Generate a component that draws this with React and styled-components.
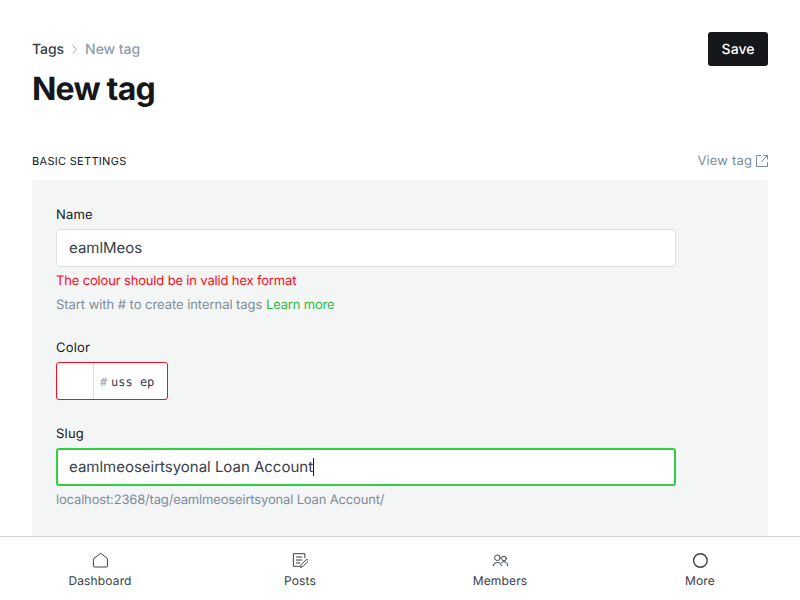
import React from 'react';
import styled, { createGlobalStyle } from 'styled-components';

const Global = createGlobalStyle`
  *, *::before, *::after { box-sizing: border-box; }
  body {
    margin: 0;
    background: #fff;
    color: #15171a;
    font-family: Inter, "Liberation Sans", sans-serif;
    font-weight: 370;
    text-rendering: geometricPrecision;
    overflow: hidden;
  }
`;

const Page = styled.div`
  height: 600px;
  display: flex;
  flex-direction: column;
`;
const Main = styled.main`
  flex: 1;
  min-height: 0;
  overflow: hidden;
  padding: 32px 32px 0;
`;
const Header = styled.header`
  display: flex;
  justify-content: space-between;
  align-items: flex-start;
  height: 117px;
`;
const Breadcrumb = styled.nav`
  display: flex;
  align-items: center;
  height: 35px;
  font-size: 14px;
  font-weight: 500;
  letter-spacing: -0.05px;
  color: #8e9cac;
  svg { margin: 0 7px; }
`;
const Crumb = styled.a`
  color: #394047;
`;
const Title = styled.h1`
  margin: 0;
  font-size: 32px;
  line-height: 44px;
  font-weight: 700;
  letter-spacing: -0.8px;
`;
const SaveButton = styled.button`
  width: 60px;
  height: 34px;
  padding: 1px 0 0;
  border: 0;
  border-radius: 3px;
  background: #15171a;
  color: #fff;
  font: 500 14px Inter, sans-serif;
  text-rendering: geometricPrecision;
`;
const SectionHead = styled.div`
  display: flex;
  justify-content: space-between;
  align-items: center;
  height: 24px;
  margin-bottom: 7px;
`;
const SectionTitle = styled.h4`
  margin: 0;
  font-size: 11px;
  font-weight: 400;
  letter-spacing: 0.3px;
`;
const ViewLink = styled.a`
  display: flex;
  align-items: center;
  gap: 4px;
  font-size: 13px;
  letter-spacing: 0.15px;
  color: #7c8b9a;
`;
const Panel = styled.section`
  height: 420px;
  padding: 24px;
  border-radius: 3px;
  background: #f4f6f6;
`;
const Field = styled.div`
  width: 620px;
  margin-bottom: ${(p) => p.$gap}px;
`;
const Label = styled.label`
  display: block;
  height: 20px;
  margin-bottom: 5px;
  font-size: 13px;
  line-height: 22px;
  font-weight: 400;
  letter-spacing: 0.2px;
`;
const TextBox = styled.div`
  display: flex;
  align-items: center;
  height: 38px;
  padding: 0 ${(p) => (p.$focused ? 11 : 12)}px 1px;
  border: ${(p) => (p.$focused ? '2px solid #30cf43' : '1px solid #dddfe1')};
  border-radius: 3px;
  background: #fff;
  color: #394047;
  font-size: 15px;
  letter-spacing: -0.01px;
`;
const Caret = styled.span`
  width: 1px;
  height: 18px;
  background: #15171a;
`;
const Note = styled.p`
  height: 20px;
  margin: ${(p) => p.$top}px 0 0;
  font-size: 13px;
  line-height: 22px;
  letter-spacing: ${(p) => p.$spacing}px;
  color: ${(p) => (p.$error ? '#f50b23' : '#7c8b9a')};
  a { color: #30b840; letter-spacing: -0.18px; }
`;
const ColorBox = styled.div`
  display: flex;
  align-items: center;
  width: 112px;
  height: 38px;
  border: 1px solid #f50b23;
  border-radius: 3px;
  background: #fff;
  color: #394047;
  font: 12px/18px "DejaVu Sans Mono", monospace;
`;
const Swatch = styled.span`
  width: 37px;
  height: 36px;
  margin-right: 6px;
  border-right: 1px solid #dddfe1;
`;
const Hash = styled.span`
  width: 11px;
  padding-top: 1px;
  color: #99a3b3;
`;
const HexValue = styled.span`
  padding-top: 1px;
`;
const BottomBar = styled.nav`
  display: grid;
  grid-template-columns: repeat(4, 1fr);
  height: 64px;
  border-top: 1px solid #ced4d9;
  background: #fff;
`;
const Tab = styled.a`
  display: flex;
  flex-direction: column;
  align-items: center;
  padding-top: 15px;
  font-size: 12px;
  line-height: 16px;
  letter-spacing: 0.15px;
  color: #394047;
  svg { margin-bottom: 5px; }
`;

const Icon = ({ children }) => (
  <svg width="16" height="16" viewBox="-0.4 -0.5 16 16" fill="none" stroke="#394047" strokeWidth="1" strokeLinecap="round" strokeLinejoin="round">
    {children}
  </svg>
);

export default function App() {
  return (
    <Page>
      <Global />
      <Main>
        <Header>
          <div>
            <Breadcrumb>
              <Crumb>Tags</Crumb>
              <svg width="7" height="9" viewBox="0 0 7 9" fill="none" stroke="#8e9cac" strokeWidth="0.9"><path d="M1.5.5l4 4-4 4" /></svg>
              <span>New tag</span>
            </Breadcrumb>
            <Title>New tag</Title>
          </div>
          <SaveButton>Save</SaveButton>
        </Header>
        <SectionHead>
          <SectionTitle>BASIC SETTINGS</SectionTitle>
          <ViewLink>
            View tag
            <svg width="12" height="12" viewBox="0 0 12 12" fill="none" stroke="#7c8b9a"><path d="M5 .5H.5v11h11V7M7.5.5h4v4M11.5.5L5.3 6.7" /></svg>
          </ViewLink>
        </SectionHead>
        <Panel>
          <Field $gap={23}>
            <Label>Name</Label>
            <TextBox>eamlMeos</TextBox>
            <Note $top={3} $error $spacing={-0.16}>The colour should be in valid hex format</Note>
            <Note $top={4} $spacing={-0.05}>Start with # to create internal tags <a>Learn more</a></Note>
          </Field>
          <Field $gap={23}>
            <Label>Color</Label>
            <ColorBox><Swatch /><Hash>#</Hash><HexValue>uss ep</HexValue></ColorBox>
          </Field>
          <Field $gap={0}>
            <Label>Slug</Label>
            <TextBox $focused>eamlmeoseirtsyonal Loan Account<Caret /></TextBox>
            <Note $top={3} $spacing={-0.165}>localhost:2368/tag/eamlmeoseirtsyonal Loan Account/</Note>
          </Field>
        </Panel>
      </Main>
      <BottomBar>
        <Tab>
          <Icon><path d="M8 1L1 6.4v7.2q0 .9.9.9h12.2q.9 0 .9-.9V6.4z" /></Icon>
          Dashboard
        </Tab>
        <Tab>
          <Icon>
            <path d="M12.5 5.2V1.2H1v12.6h6M4 4.5h5.5M4 7.5h5.5M4 10.5h3.5" />
            <path d="M8.2 14.6l.6-2.5 4.8-4.7a1.2 1.2 0 0 1 1.8 1.7l-4.8 4.8z" />
          </Icon>
          Posts
        </Tab>
        <Tab>
          <Icon>
            <circle cx="5" cy="5.3" r="2.8" /><circle cx="11.6" cy="6" r="2.3" />
            <path d="M.7 13.3a4.4 4.4 0 0 1 8.6 0M9.3 10a3.7 3.7 0 0 1 6 3.3" />
          </Icon>
          Members
        </Tab>
        <Tab>
          <Icon><circle cx="8" cy="8" r="6.8" strokeWidth="1.4" /></Icon>
          More
        </Tab>
      </BottomBar>
    </Page>
  );
}
